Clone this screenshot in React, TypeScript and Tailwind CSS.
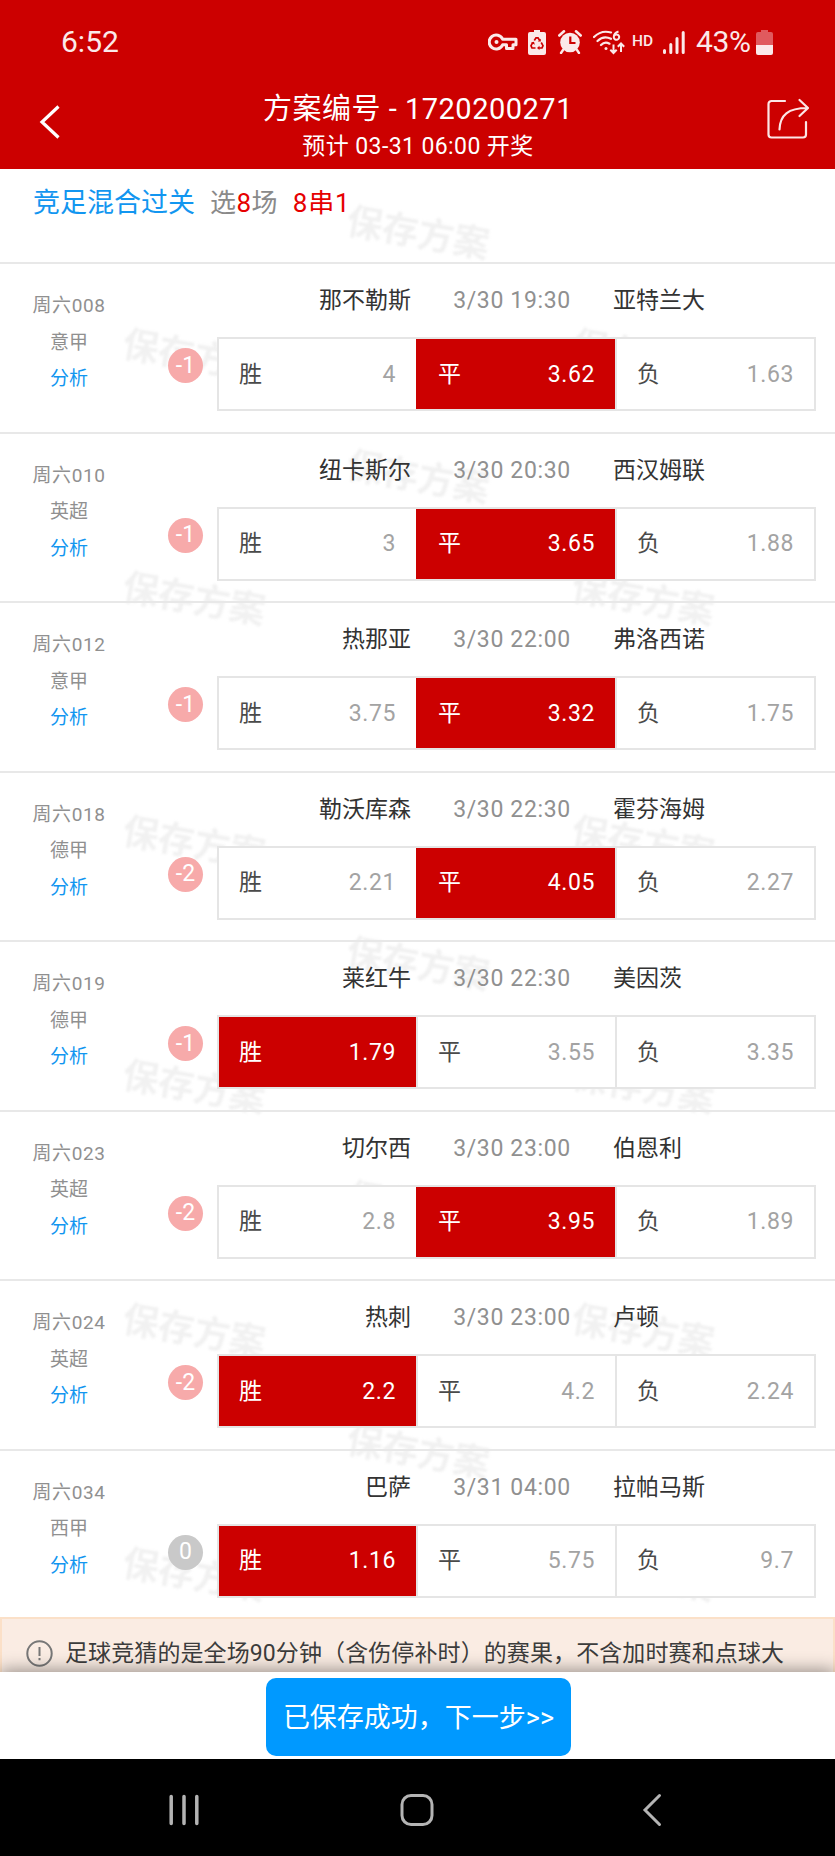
import clsx from 'clsx';

interface Match {
  id: string;
  league: string;
  home: string;
  away: string;
  time: string;
  handicap: string;
  odds: string[];
  picked: number;
}

const matches: Match[] = [
  { id: '周六008', league: '意甲', home: '那不勒斯', away: '亚特兰大', time: '3/30 19:30', handicap: '-1', odds: ['4', '3.62', '1.63'], picked: 1 },
  { id: '周六010', league: '英超', home: '纽卡斯尔', away: '西汉姆联', time: '3/30 20:30', handicap: '-1', odds: ['3', '3.65', '1.88'], picked: 1 },
  { id: '周六012', league: '意甲', home: '热那亚', away: '弗洛西诺', time: '3/30 22:00', handicap: '-1', odds: ['3.75', '3.32', '1.75'], picked: 1 },
  { id: '周六018', league: '德甲', home: '勒沃库森', away: '霍芬海姆', time: '3/30 22:30', handicap: '-2', odds: ['2.21', '4.05', '2.27'], picked: 1 },
  { id: '周六019', league: '德甲', home: '莱红牛', away: '美因茨', time: '3/30 22:30', handicap: '-1', odds: ['1.79', '3.55', '3.35'], picked: 0 },
  { id: '周六023', league: '英超', home: '切尔西', away: '伯恩利', time: '3/30 23:00', handicap: '-2', odds: ['2.8', '3.95', '1.89'], picked: 1 },
  { id: '周六024', league: '英超', home: '热刺', away: '卢顿', time: '3/30 23:00', handicap: '-2', odds: ['2.2', '4.2', '2.24'], picked: 0 },
  { id: '周六034', league: '西甲', home: '巴萨', away: '拉帕马斯', time: '3/31 04:00', handicap: '0', odds: ['1.16', '5.75', '9.7'], picked: 0 },
];

const outcomes = ['胜', '平', '负'];

const watermarks = [0, 1, 2, 3, 4, 5].flatMap((i) => [
  { x: 346, y: 47 + i * 243.8 },
  { x: 122, y: 169.5 + i * 243.8 },
  { x: 571, y: 169.5 + i * 243.8 },
]);

function StatusBar() {
  return (
    <div className="flex h-[84px] items-center pl-[61px] text-[#fbe9e9]">
      <span className="w-[427px] text-[30px] leading-none">6:52</span>
      <svg className="mr-[10px] h-[18px] w-[30px]" viewBox="0 0 30 18" fill="none" stroke="currentColor" strokeWidth="3">
        <path d="M14.6 6.2A7 7 0 1 0 14.6 11.8H18.5V15.5H25V11.8H28V6.2Z" strokeLinejoin="round" />
        <circle cx="8.5" cy="9" r="2" fill="currentColor" stroke="none" />
      </svg>
      <svg className="mr-[12px] h-[25px] w-[18px]" viewBox="0 0 18 25">
        <path d="M6 0h6v2h4a2 2 0 0 1 2 2v19a2 2 0 0 1-2 2H2a2 2 0 0 1-2-2V4a2 2 0 0 1 2-2h4z" fill="currentColor" />
        <path d="M6.3 10.5L8 7.8h2l1.7 2.7M13.2 12.5l1.8 3.2-1 2.3h-3M7.5 18H4l-1-2.3 1.8-3.2" fill="none" stroke="#c00" strokeWidth="1.7" />
        <path d="M9.8 11.5h3V8.7zM11.5 15.8v4.3L9 18zM3 12.8l3-1 .8 3z" fill="#c00" />
      </svg>
      <svg className="mr-[11px] h-[24px] w-[24px]" viewBox="0 0 24 24" fill="none" stroke="currentColor">
        <circle cx="12" cy="12.5" r="9.8" fill="currentColor" stroke="none" />
        <path d="M1.3 5.5L6 1.3M22.7 5.5L18 1.3" strokeWidth="2.6" strokeLinecap="round" />
        <path d="M5 20l-2 3M19 20l2 3" strokeWidth="2.4" strokeLinecap="round" />
        <path d="M12.3 6.5V13H17.5" stroke="#c00" strokeWidth="2.2" />
      </svg>
      <svg className="mr-[7px] h-[25px] w-[32px]" viewBox="0 0 32 25" fill="none" stroke="currentColor" strokeWidth="2.2">
        <path d="M1 7C6 2 12 .8 18 2.5M4.5 11c4-4 9-4.6 13.5-2.2M8 15c2.4-2.5 5.5-3 8.5-1.3" strokeLinecap="round" />
        <circle cx="13" cy="18.5" r="1.5" fill="currentColor" stroke="none" />
        <path d="M25.5 1.5C22 2.5 20.8 5 20.8 7.2a2.7 2.7 0 1 0 .4-1.5" strokeWidth="2" />
        <path d="M20.5 14.5v8M17.3 19.7l3.2 3.3 3.2-3.3M28 22v-8M24.8 16.8L28 13.5l3.2 3.3" strokeWidth="2" />
      </svg>
      <span className="w-[31px] text-[15.5px] leading-none font-medium">HD</span>
      <svg className="mr-[11px] h-[23px] w-[22px]" viewBox="0 0 22 23" stroke="currentColor" strokeWidth="3" strokeLinecap="round">
        <path d="M1.5 19.5v2M7.8 13.5v8M14 7.5v14M20.2 1.5v20" />
      </svg>
      <span className="w-[60px] text-[30px] leading-none tracking-[-0.4px]">43%</span>
      <svg className="h-[25px] w-[17px]" viewBox="0 0 17 25">
        <path d="M5 0h7v2h3a2 2 0 0 1 2 2v11H0V4a2 2 0 0 1 2-2h3z" fill="#e05a5e" />
        <path d="M0 15h17v8a2 2 0 0 1-2 2H2a2 2 0 0 1-2-2z" fill="currentColor" />
      </svg>
    </div>
  );
}

function Header() {
  return (
    <header className="h-[169px] bg-[#cc0000] text-white">
      <StatusBar />
      <div className="flex h-[85px] items-start pr-[25px] pl-[39px]">
        <svg className="mt-[20px] h-[36px] w-[22px]" viewBox="0 0 22 36" fill="none" stroke="currentColor" strokeWidth="3.2">
          <path d="M19.5 2.5L3 18l16.5 15.5" />
        </svg>
        <div className="ml-[57px] w-[600px] text-center">
          <h1 className="mt-[7px] text-[29px] leading-[36px] tracking-[0.5px]">方案编号 - 1720200271</h1>
          <p className="mt-[5px] text-[23px] leading-[30px] tracking-[0.4px]">预计 03-31 06:00 开奖</p>
        </div>
        <svg className="mt-[14px] ml-auto h-[42px] w-[43px]" viewBox="0 0 43 42" fill="none" stroke="#fce6e6" strokeWidth="2.2" strokeLinecap="round" strokeLinejoin="round">
          <path d="M18 3H4.5a3 3 0 0 0-3 3v30.5a3 3 0 0 0 3 3H36a3 3 0 0 0 3-3V24" />
          <path d="M12.5 31.5C13 17 21 10 40.5 10M32.5 2l8.5 8-8.5 8" />
        </svg>
      </div>
    </header>
  );
}

function MatchRow({ match }: { match: Match }) {
  return (
    <div className="flex h-[169.5px] border-t-2 border-[#e8e8e8]">
      <div className="flex w-[138px] flex-col items-center pt-[24px] text-[19px] leading-[36.7px] text-[#909090]">
        <span className="tracking-[0.6px]">{match.id}</span>
        <span>{match.league}</span>
        <span className="text-[#1296f0]">分析</span>
      </div>
      <div className="flex w-[79px] justify-center pt-[84px] pl-[16px]">
        <span
          className={clsx(
            'flex size-[35px] items-center justify-center rounded-full pb-[1px] text-[23px] leading-none text-white',
            match.handicap === '0' ? 'bg-[#c9c9c9]' : 'bg-[#f7aaaa]',
          )}
        >
          {match.handicap}
        </span>
      </div>
      <div className="w-[599px] pt-[21px]">
        <div className="flex h-[32px] items-center text-[23px] leading-[32px] text-[#333]">
          <span className="w-[194px] text-right">{match.home}</span>
          <span className="w-[202px] text-center tracking-[0.65px] text-[#909090]">{match.time}</span>
          <span>{match.away}</span>
        </div>
        <div className="mt-[20px] flex h-[74px] border-2 border-[#e5e5e5] bg-white">
          {outcomes.map((name, i) => (
            <div
              key={name}
              className={clsx(
                'flex flex-1 items-center justify-between px-[20px] pt-[2px] text-[23px]',
                i > 0 && 'border-l-2',
                match.picked === i ? 'border-[#cc0000] bg-[#cc0000] text-white' : 'border-[#e5e5e5]',
              )}
            >
              <span className={clsx(match.picked !== i && 'text-[#4a4a4a]')}>{name}</span>
              <span className={clsx('tracking-[0.6px]', match.picked !== i && 'text-[#a3a3a3]')}>{match.odds[i]}</span>
            </div>
          ))}
        </div>
      </div>
    </div>
  );
}

export default function App() {
  return (
    <div className="flex h-[1856px] w-[835px] flex-col overflow-hidden bg-white font-[Roboto,'Noto_Sans_CJK_SC',sans-serif]">
      <Header />
      <main className="relative h-[1503px] overflow-hidden">
        {watermarks.map((mark) => (
          <span
            key={`${mark.x}-${mark.y}`}
            className="absolute rotate-[10deg] text-[36px] leading-[36px] font-bold whitespace-nowrap text-[#f1f1f1] blur-[1px]"
            style={{ left: mark.x, top: mark.y }}
          >
            保存方案
          </span>
        ))}
        <div className="relative">
          <div className="flex h-[93px] items-start pt-[15px] pl-[33px] text-[26px] leading-[38px]">
            <span className="text-[27px] text-[#1296f0]">竞足混合过关</span>
            <span className="ml-[15px] tracking-[0.4px] text-[#8a8a8a]">
              选<span className="text-[#e60000]">8</span>场
            </span>
            <span className="ml-[15px] tracking-[0.8px] text-[#e60000]">8串1</span>
          </div>
          {matches.map((match) => (
            <MatchRow key={match.id} match={match} />
          ))}
          <div className="-mt-px flex h-[100px] items-start border-2 border-[#fbe0c8] bg-[#faece3] pt-[19px] pl-[24px] text-[23px] leading-[32px] text-[#3c3c3c]">
            <svg className="mt-[2px] mr-[12px] size-[27px]" viewBox="0 0 27 27" fill="none" stroke="#777" strokeWidth="2">
              <circle cx="13.5" cy="13.5" r="12.2" />
              <path d="M13.5 7v9M13.5 18v2.2" />
            </svg>
            <p className="tracking-[0.1px] whitespace-nowrap">足球竞猜的是全场90分钟（含伤停补时）的赛果，不含加时赛和点球大</p>
          </div>
        </div>
      </main>
      <footer className="relative flex h-[87px] justify-center bg-white pt-[6px] shadow-[0_-2px_16px_rgba(0,0,0,0.4)]">
        <button className="ml-[2px] h-[78px] w-[305px] rounded-[10px] bg-[#0099ff] pt-[2px] text-[27px] text-white">已保存成功，下一步&gt;&gt;</button>
      </footer>
      <nav className="relative flex h-[97px] items-center bg-black pt-[5px] pl-[168px] text-[#b4b4b4]">
        <svg className="h-[32px] w-[32px]" viewBox="0 0 32 32" stroke="currentColor" strokeWidth="3.5" strokeLinecap="round">
          <path d="M3.2 2.5v27M16 2.5v27M28.8 2.5v27" />
        </svg>
        <svg className="ml-[200px] h-[32px] w-[34px]" viewBox="0 0 34 32" fill="none" stroke="currentColor" strokeWidth="3">
          <rect x="2" y="1.5" width="30" height="29" rx="9" />
        </svg>
        <svg className="ml-[208px] h-[34px] w-[20px]" viewBox="0 0 20 34" fill="none" stroke="currentColor" strokeWidth="3" strokeLinecap="round">
          <path d="M17.5 2.5L3 17l14.5 14.5" />
        </svg>
      </nav>
    </div>
  );
}
